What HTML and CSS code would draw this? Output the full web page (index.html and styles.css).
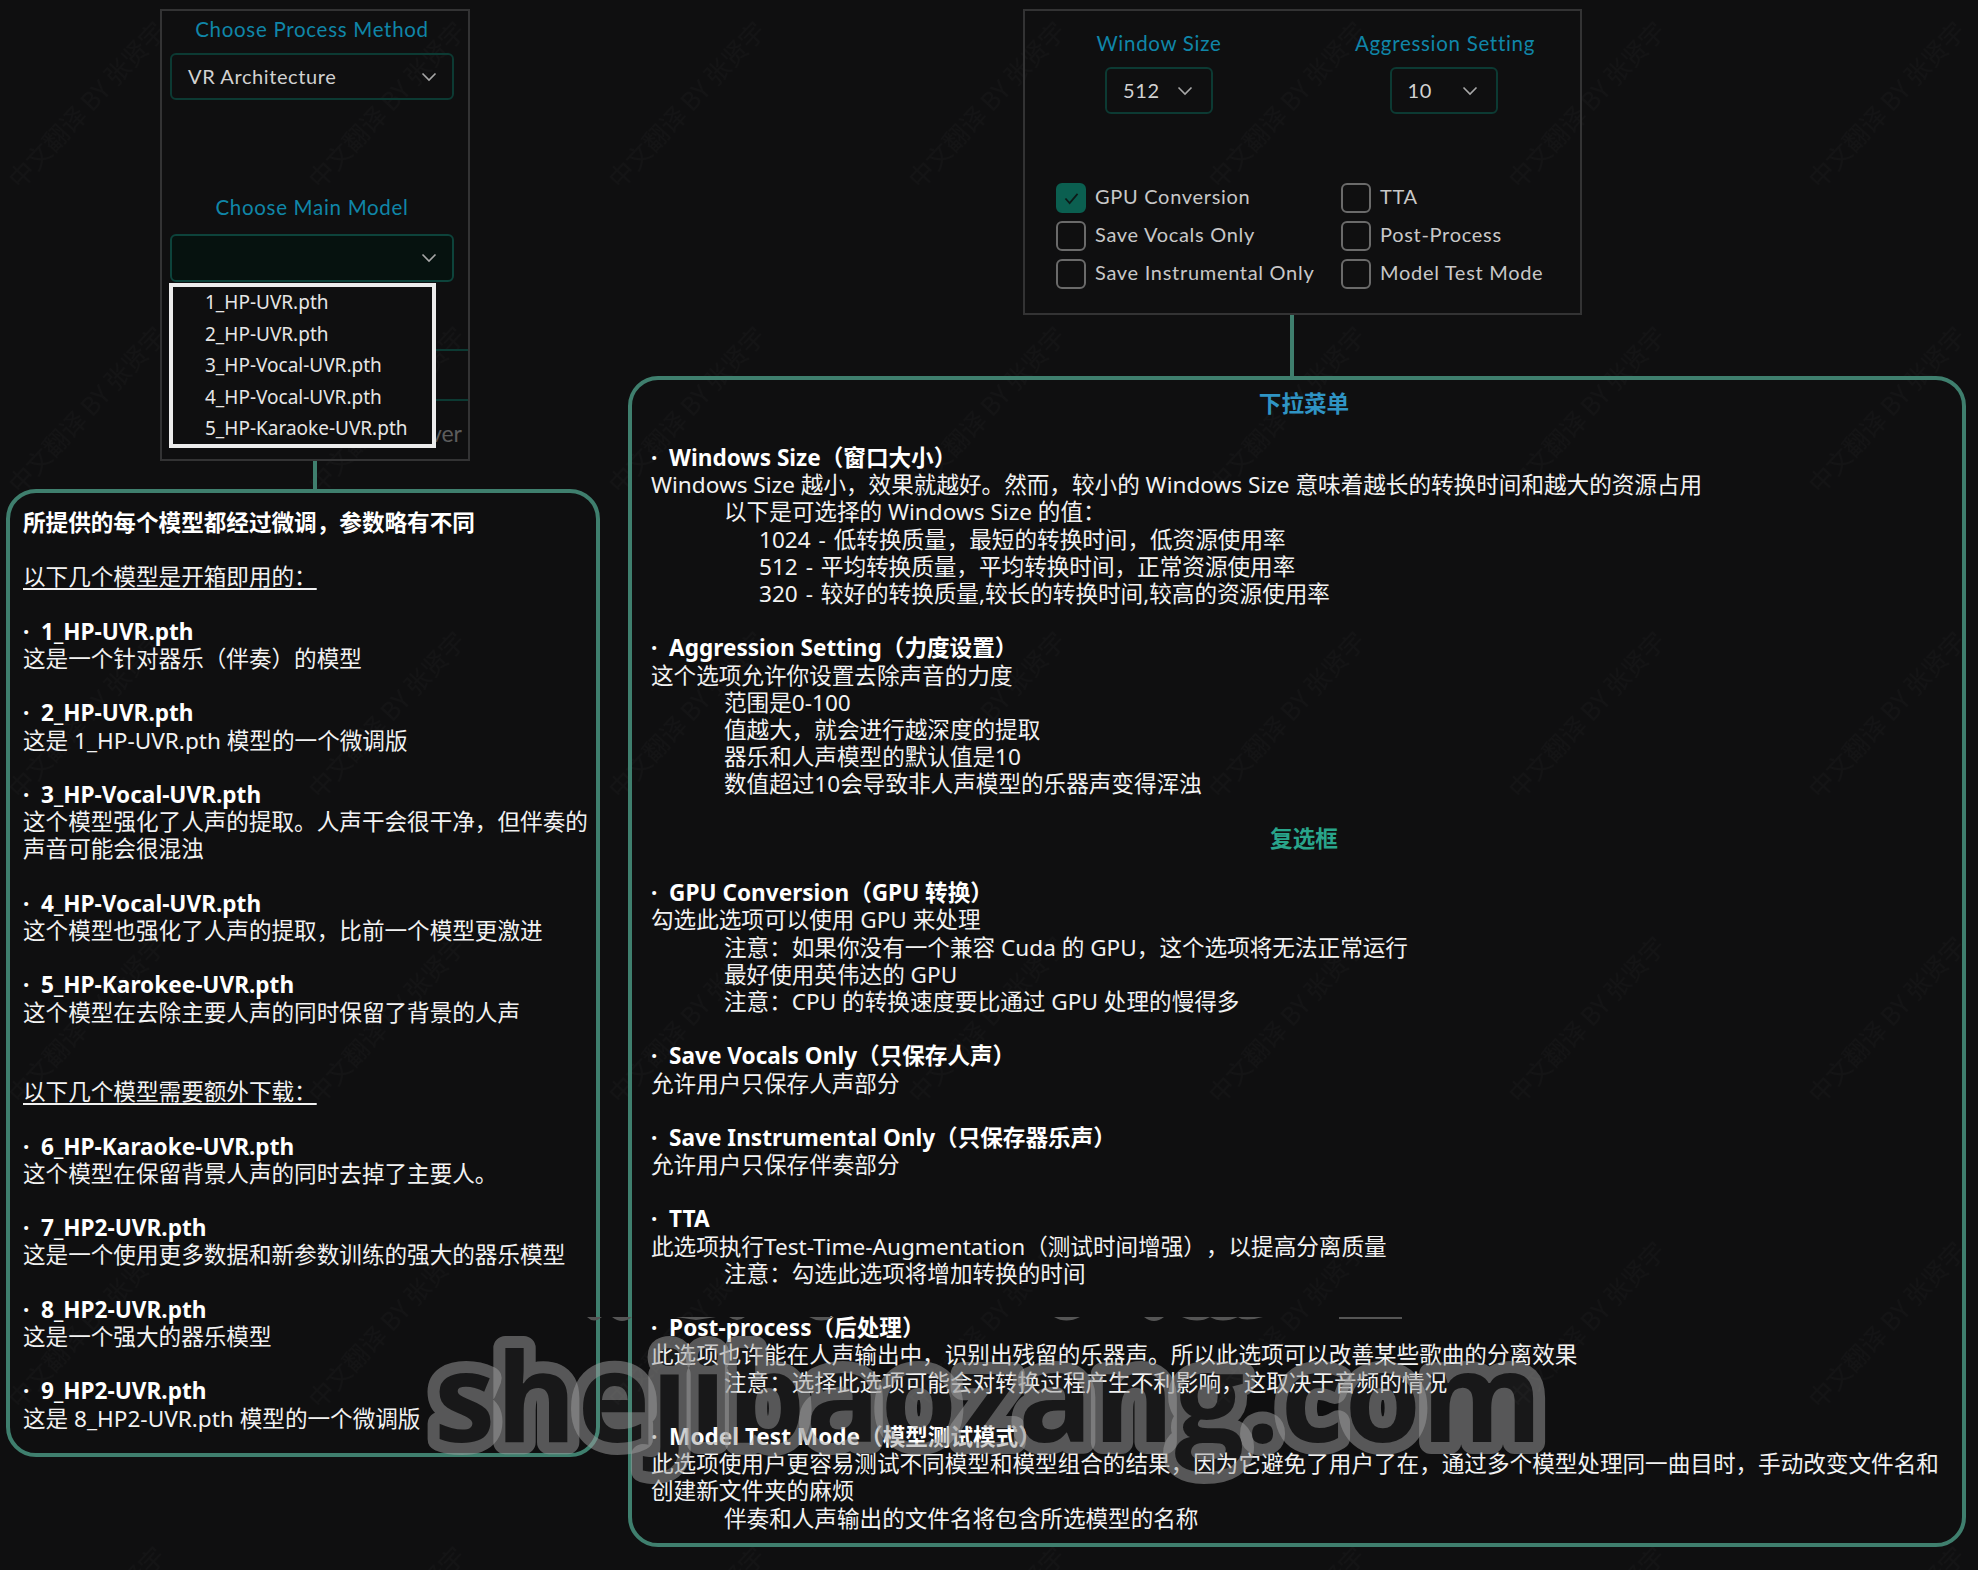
FILE: index.html
```html
<!DOCTYPE html>
<html lang="zh-CN">
<head>
<meta charset="utf-8">
<title>VR Architecture 选项说明</title>
<link rel="stylesheet" href="styles.css">
</head>
<body>
<div class="page">
  <svg class="faint" width="1978" height="1570" xmlns="http://www.w3.org/2000/svg">
    <defs>
      <pattern id="wm" x="0" y="0" width="300" height="305" patternUnits="userSpaceOnUse">
        <text class="faint-text" x="0" y="0" transform="translate(20 190) rotate(-47)">中文翻译 BY 张贤宇</text>
      </pattern>
    </defs>
    <rect width="1978" height="1570" fill="url(#wm)"/>
  </svg>

  <div class="col col-left">
    <section class="panel panel-method">
      <h3 class="ctl-title">Choose Process Method</h3>
      <div class="select select-wide"><span>VR Architecture</span>
        <svg class="chev" viewBox="0 0 16 10"><path d="M1.5 1.5 8 8l6.5-6.5"/></svg></div>
      <h3 class="ctl-title title-model">Choose Main Model</h3>
      <div class="select select-wide select-active">
        <svg class="chev" viewBox="0 0 16 10"><path d="M1.5 1.5 8 8l6.5-6.5"/></svg></div>
      <div class="hidden-row"></div>
      <div class="hidden-text">Model Stem Driver</div>
      <ul class="popup">
        <li>1_HP-UVR.pth</li>
        <li>2_HP-UVR.pth</li>
        <li>3_HP-Vocal-UVR.pth</li>
        <li>4_HP-Vocal-UVR.pth</li>
        <li>5_HP-Karaoke-UVR.pth</li>
      </ul>
    </section>
    <div class="stem stem-left"></div>
    <article class="note note-left">
      <p class="strong gap">所提供的每个模型都经过微调，参数略有不同</p>
      <p class="gap"><u>以下几个模型是开箱即用的：</u></p>
      <p class="strong">·&nbsp; 1_HP-UVR.pth</p>
      <p class="gap">这是一个针对器乐（伴奏）的模型</p>
      <p class="strong">·&nbsp; 2_HP-UVR.pth</p>
      <p class="gap">这是 1_HP-UVR.pth 模型的一个微调版</p>
      <p class="strong">·&nbsp; 3_HP-Vocal-UVR.pth</p>
      <p class="gap">这个模型强化了人声的提取。人声干会很干净，但伴奏的声音可能会很混浊</p>
      <p class="strong">·&nbsp; 4_HP-Vocal-UVR.pth</p>
      <p class="gap">这个模型也强化了人声的提取，比前一个模型更激进</p>
      <p class="strong">·&nbsp; 5_HP-Karokee-UVR.pth</p>
      <p class="gap2">这个模型在去除主要人声的同时保留了背景的人声</p>
      <p class="gap"><u>以下几个模型需要额外下载：</u></p>
      <p class="strong">·&nbsp; 6_HP-Karaoke-UVR.pth</p>
      <p class="gap">这个模型在保留背景人声的同时去掉了主要人。</p>
      <p class="strong">·&nbsp; 7_HP2-UVR.pth</p>
      <p class="gap">这是一个使用更多数据和新参数训练的强大的器乐模型</p>
      <p class="strong">·&nbsp; 8_HP2-UVR.pth</p>
      <p class="gap">这是一个强大的器乐模型</p>
      <p class="strong">·&nbsp; 9_HP2-UVR.pth</p>
      <p>这是 8_HP2-UVR.pth 模型的一个微调版</p>
    </article>
  </div>

  <div class="col col-right">
    <section class="panel panel-options">
      <div class="select-row">
        <div class="select-col">
          <h3 class="ctl-title">Window Size</h3>
          <div class="select select-small"><span>512</span>
            <svg class="chev" viewBox="0 0 16 10"><path d="M1.5 1.5 8 8l6.5-6.5"/></svg></div>
        </div>
        <div class="select-col">
          <h3 class="ctl-title">Aggression Setting</h3>
          <div class="select select-small"><span>10</span>
            <svg class="chev" viewBox="0 0 16 10"><path d="M1.5 1.5 8 8l6.5-6.5"/></svg></div>
        </div>
      </div>
      <div class="checks">
        <div class="check"><span class="box box-on"><svg viewBox="0 0 16 14"><path d="M1.5 7 6 12 14.5 2"/></svg></span>GPU Conversion</div>
        <div class="check"><span class="box"></span>TTA</div>
        <div class="check"><span class="box"></span>Save Vocals Only</div>
        <div class="check"><span class="box"></span>Post-Process</div>
        <div class="check"><span class="box"></span>Save Instrumental Only</div>
        <div class="check"><span class="box"></span>Model Test Mode</div>
      </div>
    </section>
    <div class="stem stem-right"></div>
    <article class="note note-right">
      <p class="heading heading-blue gap">下拉菜单</p>
      <p class="strong">·&nbsp; Windows Size（窗口大小）</p>
      <p>Windows Size 越小，效果就越好。然而，较小的 Windows Size 意味着越长的转换时间和越大的资源占用</p>
      <p class="in1">以下是可选择的 Windows Size 的值：</p>
      <p class="in2">1024 - 低转换质量，最短的转换时间，低资源使用率</p>
      <p class="in2">512 - 平均转换质量，平均转换时间，正常资源使用率</p>
      <p class="in2 gap">320 - 较好的转换质量,较长的转换时间,较高的资源使用率</p>
      <p class="strong">·&nbsp; Aggression Setting（力度设置）</p>
      <p>这个选项允许你设置去除声音的力度</p>
      <p class="in1">范围是0-100</p>
      <p class="in1">值越大，就会进行越深度的提取</p>
      <p class="in1">器乐和人声模型的默认值是10</p>
      <p class="in1 gap">数值超过10会导致非人声模型的乐器声变得浑浊</p>
      <p class="heading heading-green gap">复选框</p>
      <p class="strong">·&nbsp; GPU Conversion（GPU 转换）</p>
      <p>勾选此选项可以使用 GPU 来处理</p>
      <p class="in1">注意：如果你没有一个兼容 Cuda 的 GPU，这个选项将无法正常运行</p>
      <p class="in1">最好使用英伟达的 GPU</p>
      <p class="in1 gap">注意：CPU 的转换速度要比通过 GPU 处理的慢得多</p>
      <p class="strong">·&nbsp; Save Vocals Only（只保存人声）</p>
      <p class="gap">允许用户只保存人声部分</p>
      <p class="strong">·&nbsp; Save Instrumental Only（只保存器乐声）</p>
      <p class="gap">允许用户只保存伴奏部分</p>
      <p class="strong">·&nbsp; TTA</p>
      <p>此选项执行Test-Time-Augmentation（测试时间增强），以提高分离质量</p>
      <p class="in1 gap">注意：勾选此选项将增加转换的时间</p>
      <p class="strong">·&nbsp; Post-process（后处理）</p>
      <p>此选项也许能在人声输出中，识别出残留的乐器声。所以此选项可以改善某些歌曲的分离效果</p>
      <p class="in1 gap">注意：选择此选项可能会对转换过程产生不利影响，这取决于音频的情况</p>
      <p class="strong">·&nbsp; Model Test Mode（模型测试模式）</p>
      <p>此选项使用户更容易测试不同模型和模型组合的结果，因为它避免了用户了在，通过多个模型处理同一曲目时，手动改变文件名和创建新文件夹的麻烦</p>
      <p class="in1">伴奏和人声输出的文件名将包含所选模型的名称</p>
    </article>
  </div>

  <svg class="stamp" width="1150" height="200" viewBox="0 0 1150 200" xmlns="http://www.w3.org/2000/svg">
    <defs>
      <text id="stampWord" x="14" y="142">shejibaozang.com</text>
      <mask id="stampHole" maskUnits="userSpaceOnUse" x="0" y="0" width="1150" height="200">
        <rect width="1150" height="200" fill="#fff"/>
        <use href="#stampWord" fill="#000"/>
      </mask>
    </defs>
    <use class="stamp-band" href="#stampWord" mask="url(#stampHole)"/>
    <use class="stamp-core" href="#stampWord"/>
  </svg>
  <svg class="stamp-clip" width="830" height="8" viewBox="0 0 830 8" xmlns="http://www.w3.org/2000/svg">
    <path d="M3 0q7 7 15 0zM28 0q10 8 20 0zM92 0h40l-20 3zM145 0q8 6 16 0zM225 0q12 7 25 0zM470 0q12 7 26 0zM560 0q10 8 20 0zM598 0q16 7 28 0 12 7 28 0 6 5 25 0zM755 0h63v2h-63z"/>
  </svg>
</div>
</body>
</html>
```
FILE: styles.css
```css
* { box-sizing: border-box; }
html, body { margin: 0; padding: 0; background: #0f0f10; }
.page {
  position: relative;
  width: 1978px;
  height: 1570px;
  overflow: hidden;
  display: flex;
  gap: 28px;
  padding: 9px 0 0 6px;
  color: #f2f2f2;
  font-family: "Noto Sans", "Noto Sans CJK SC", sans-serif;
}
.faint { position: absolute; left: 0; top: 0; }
.faint-text { fill: #141415; font-size: 25px; font-family: "Noto Sans CJK SC", sans-serif; }
.col { position: relative; display: flex; flex-direction: column; }
.col-left { width: 594px; }
.col-right { width: 1338px; }

/* control panels */
.panel {
  position: relative;
  border: 2px solid #333334;
  background: transparent;
  font-family: Lato, "Open Sans", sans-serif;
  overflow: hidden;
}
.panel-method { margin-left: 154px; width: 310px; height: 452px; padding: 0 14px 0 8px; }
.panel-options { margin-left: 395px; width: 559px; height: 306px; }
.ctl-title {
  margin: 0;
  text-align: center;
  font-size: 20.5px;
  font-weight: 400;
  letter-spacing: 0.7px;
  line-height: 28px;
  color: #0f86a8;
}
.panel-method > .ctl-title:first-child { margin-top: 4px; }
.title-model { margin-top: 93px; }
.select {
  display: flex;
  align-items: center;
  justify-content: space-between;
  height: 47px;
  border: 2px solid #0c3a33;
  border-radius: 6px;
  color: #d2d2d2;
  font-size: 20px;
  letter-spacing: 0.6px;
}
.select > span { padding-bottom: 2px; }
.select-wide { margin-top: 10px; padding: 0 15px 0 16px; }
.select-active { justify-content: flex-end; background: #06120f; margin-top: 13px; border-color: #0d433b; height: 48px; }
.chev { width: 16px; height: 10px; fill: none; stroke: #a8a8a8; stroke-width: 1.6; }
.hidden-row {
  position: absolute;
  left: 8px;
  right: -6px;
  top: 338px;
  height: 52px;
  border: 2px solid #0c3a33;
  border-radius: 6px;
}
.hidden-text {
  position: absolute;
  right: 6px;
  top: 408px;
  font-size: 23px;
  line-height: 28px;
  color: #5c5c5c;
}
.popup {
  position: absolute;
  left: 7px;
  top: 272px;
  width: 267px;
  height: 165px;
  margin: 0;
  padding: 0 0 0 32px;
  list-style: none;
  border: 4px solid #ececec;
  background: #0f0f10;
  font-family: "Noto Sans", sans-serif;
  font-size: 19px;
  line-height: 31.5px;
  color: #e6e6e6;
}

.select-row {
  display: grid;
  grid-template-columns: 268px 268px;
  gap: 18px;
  padding-top: 18px;
}
.select-col { display: flex; flex-direction: column; align-items: center; }
.select-small { width: 108px; padding: 0 18px 0 16px; margin-top: 10px; }
.select-col:last-child .select-small { margin-right: 3px; }
.checks {
  display: grid;
  grid-template-columns: 285px 240px;
  row-gap: 8px;
  margin-top: 69px;
  padding-left: 31px;
}
.check {
  display: flex;
  align-items: flex-start;
  gap: 9px;
  height: 30px;
  font-size: 20px;
  line-height: 27px;
  letter-spacing: 0.7px;
  color: #c8c8c8;
  white-space: nowrap;
}
.box {
  flex: none;
  width: 30px;
  height: 30px;
  border: 2.5px solid #6a6a6a;
  border-radius: 6px;
  display: flex;
  align-items: center;
  justify-content: center;
}
.box-on { background: #0b5f50; border-color: #0b5f50; }
.box svg { width: 15px; height: 13px; fill: none; stroke: #0d1a18; stroke-width: 1.8; }

/* connectors */
.stem { width: 4px; background: #3f7f6e; }
.stem-left { height: 28px; margin-left: 307px; }
.stem-right { height: 61px; margin-left: 662px; }

/* notes */
.note {
  border: 4px solid #3f7f6e;
  border-radius: 30px;
  font-size: 22.6px;
  line-height: 27.2px;
  text-spacing-trim: space-all;
}
.note p { margin: 0; }
.note-left { height: 968px; padding: 16px 5px 18px 13px; }
.note-right { height: 1171px; padding: 9.5px 17px 11px 19px; }
.strong { font-weight: 700; color: #fff; }
.gap { margin-bottom: 1lh !important; }
.gap2 { margin-bottom: 52.5px !important; }
.in1 { padding-left: 73px; }
.in2 { padding-left: 108px; word-spacing: 2px; }
.heading { text-align: center; font-weight: 700; padding-left: 12px; }
.heading-blue { color: #2f94c4; }
.heading-green { color: #29a58b; }
.note u { text-underline-offset: 3px; text-decoration-thickness: 1.5px; }

/* site watermark */
.stamp { position: absolute; left: 420px; top: 1300px; }
#stampWord {
  font-family: "Open Sans", sans-serif;
  font-weight: 700;
  font-size: 123px;
  letter-spacing: 0.7px;
}
.stamp-band {
  fill: none;
  stroke: rgb(160, 160, 160);
  stroke-opacity: 0.5;
  stroke-width: 24px;
  stroke-linejoin: round;
}
.stamp-core { fill: rgba(255, 255, 255, 0.04); }
.stamp-clip { position: absolute; left: 584px; top: 1317px; fill: #555; }
```
